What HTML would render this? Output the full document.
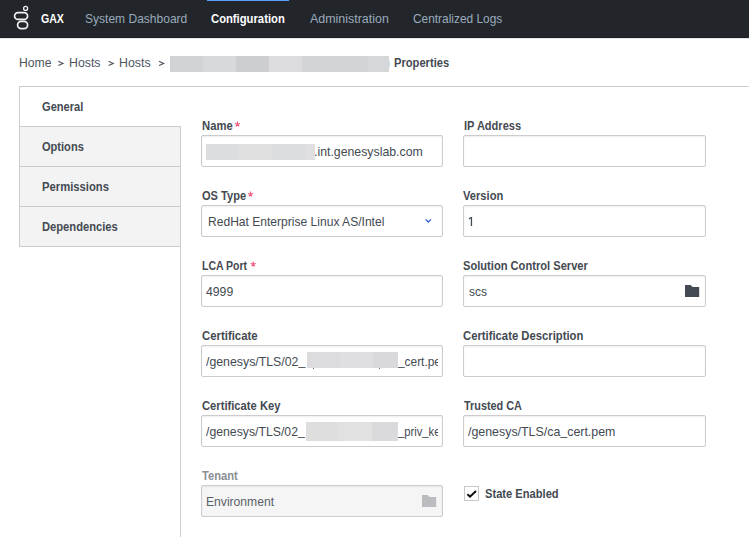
<!DOCTYPE html>
<html><head><meta charset="utf-8">
<style>
html,body{margin:0;padding:0;}
body{width:749px;height:537px;overflow:hidden;background:#fff;font-family:"Liberation Sans",sans-serif;position:relative;}
.nav{position:absolute;left:0;top:0;width:749px;height:38px;background:#22262b;box-sizing:border-box;border-bottom:1px solid #1d2024;}
.navb{position:absolute;left:0;top:38px;width:749px;height:1px;background:#e6e6e6;}
.bar{position:absolute;left:207px;top:0;width:82px;height:1px;background:#5b9dfb;}
.t{position:absolute;font-size:13px;line-height:16px;white-space:nowrap;transform-origin:0 0;display:block;}
.r{position:absolute;}
.u{position:relative;top:-1.5px;}
.ast{position:absolute;font-size:13px;line-height:16px;color:#ea4f6b;}
.inp{position:absolute;box-sizing:border-box;height:32px;border:1px solid #ccc;border-radius:2px;background:#fff;box-shadow:inset 0 1px 2px rgba(0,0,0,0.07);}
.l{left:201px;width:242px;}
.rr{left:463px;width:243px;}
.tab{position:absolute;left:19px;width:162px;height:41px;box-sizing:border-box;border:1px solid #ccc;background:#f3f3f3;}
.ln{position:absolute;background:#ccc;}
</style></head><body>
<div class="nav"></div><div class="navb"></div><div class="bar"></div>
<svg style="position:absolute;left:10px;top:2px" width="24" height="32" viewBox="0 0 24 32">
<circle cx="15.6" cy="6.4" r="2" fill="none" stroke="#f0f0f0" stroke-width="1.3"/>
<rect x="4.6" y="10.6" width="13" height="6.8" rx="3.4" fill="none" stroke="#f0f0f0" stroke-width="1.7"/>
<rect x="7.6" y="19.4" width="10" height="7.2" rx="3.6" fill="none" stroke="#f0f0f0" stroke-width="1.7"/>
</svg>
<svg style="position:absolute;left:57px;top:59px" width="9" height="9" viewBox="0 0 9 9"><path d="M1.30 2.2 L6.00 4.4 L1.30 6.6" fill="none" stroke="#4e5560" stroke-width="1.1"/></svg>
<svg style="position:absolute;left:108px;top:59px" width="9" height="9" viewBox="0 0 9 9"><path d="M0.60 2.2 L5.30 4.4 L0.60 6.6" fill="none" stroke="#4e5560" stroke-width="1.1"/></svg>
<svg style="position:absolute;left:158px;top:59px" width="9" height="9" viewBox="0 0 9 9"><path d="M1.00 2.2 L5.70 4.4 L1.00 6.6" fill="none" stroke="#4e5560" stroke-width="1.1"/></svg>
<!-- panel -->
<div class="ln" style="left:19px;top:86px;width:730px;height:1px"></div>
<div class="ln" style="left:19px;top:86px;width:1px;height:41px"></div>
<div class="ln" style="left:180px;top:126px;width:1px;height:411px"></div>
<div class="tab" style="top:126px"></div>
<div class="tab" style="top:166px"></div>
<div class="tab" style="top:206px"></div>
<!-- inputs -->
<div class="inp l" style="top:135px"></div>
<div class="inp l" style="top:205px"></div>
<div class="inp l" style="top:275px"></div>
<div class="inp l" style="top:345px"></div>
<div class="inp l" style="top:415px"></div>
<div class="inp l" style="top:485px;background:#f5f5f5"></div>
<div class="inp rr" style="top:135px"></div>
<div class="inp rr" style="top:205px"></div>
<div class="inp rr" style="top:275px"></div>
<div class="inp rr" style="top:345px"></div>
<div class="inp rr" style="top:415px"></div>
<span class="t" style="left:41.30px;top:11px;font-weight:bold;color:#ffffff;transform:scaleX(0.8140)">GAX</span>
<span class="t" style="left:84.90px;top:11px;color:#9aaabb;transform:scaleX(0.9255)">System Dashboard</span>
<span class="t" style="left:211.30px;top:11px;font-weight:bold;color:#ffffff;transform:scaleX(0.8656)">Configuration</span>
<span class="t" style="left:309.60px;top:11px;color:#9aaabb;transform:scaleX(0.9569)">Administration</span>
<span class="t" style="left:413.10px;top:11px;color:#9aaabb;transform:scaleX(0.9148)">Centralized Logs</span>
<span class="t" style="left:18.56px;top:55px;color:#4e5560;transform:scaleX(0.9388)">Home</span>
<span class="t" style="left:69.25px;top:55px;color:#4e5560;transform:scaleX(0.9471)">Hosts</span>
<span class="t" style="left:119.35px;top:55px;color:#4e5560;transform:scaleX(0.9502)">Hosts</span>
<span class="t" style="left:393.80px;top:55px;font-weight:bold;color:#444a52;transform:scaleX(0.8584)">Properties</span>
<span class="t" style="left:42.20px;top:99px;font-weight:bold;color:#444a52;transform:scaleX(0.8535)">General</span>
<span class="t" style="left:42.30px;top:139px;font-weight:bold;color:#444a52;transform:scaleX(0.8511)">Options</span>
<span class="t" style="left:42.30px;top:179px;font-weight:bold;color:#444a52;transform:scaleX(0.8653)">Permissions</span>
<span class="t" style="left:42.30px;top:219px;font-weight:bold;color:#444a52;transform:scaleX(0.8599)">Dependencies</span>
<span class="t" style="left:201.70px;top:118px;font-weight:bold;color:#444a52;transform:scaleX(0.8670)">Name</span>
<span class="t" style="left:201.60px;top:188px;font-weight:bold;color:#444a52;transform:scaleX(0.8517)">OS Type</span>
<span class="t" style="left:202.00px;top:258px;font-weight:bold;color:#444a52;transform:scaleX(0.8070)">LCA Port</span>
<span class="t" style="left:201.60px;top:328px;font-weight:bold;color:#444a52;transform:scaleX(0.8745)">Certificate</span>
<span class="t" style="left:201.60px;top:398px;font-weight:bold;color:#444a52;transform:scaleX(0.8616)">Certificate Key</span>
<span class="t" style="left:201.60px;top:468px;font-weight:bold;color:#8b8e93;transform:scaleX(0.8602)">Tenant</span>
<span class="t" style="left:463.60px;top:118px;font-weight:bold;color:#444a52;transform:scaleX(0.8495)">IP Address</span>
<span class="t" style="left:463.40px;top:188px;font-weight:bold;color:#444a52;transform:scaleX(0.8570)">Version</span>
<span class="t" style="left:463.40px;top:258px;font-weight:bold;color:#444a52;transform:scaleX(0.8557)">Solution Control Server</span>
<span class="t" style="left:463.40px;top:328px;font-weight:bold;color:#444a52;transform:scaleX(0.8677)">Certificate Description</span>
<span class="t" style="left:463.90px;top:398px;font-weight:bold;color:#444a52;transform:scaleX(0.8348)">Trusted CA</span>
<span class="t" style="left:484.60px;top:486px;font-weight:bold;color:#444a52;transform:scaleX(0.8567)">State Enabled</span>
<span class="t" style="left:314.25px;top:144px;color:#444a52;transform:scaleX(0.9464)">.int.genesyslab.com</span>
<span class="t" style="left:207.67px;top:214px;color:#444a52;transform:scaleX(0.9280)">RedHat Enterprise Linux AS/Intel</span>
<span class="t" style="left:206.00px;top:284px;color:#444a52;transform:scaleX(0.9411)">4999</span>
<span class="t" style="left:206.00px;top:354px;color:#444a52;transform:scaleX(0.9474)">/genesys/TLS/02<span class="u">_</span></span>
<span class="t" style="left:206.00px;top:424px;color:#444a52;transform:scaleX(0.9426)">/genesys/TLS/02<span class="u">_</span></span>
<span class="t" style="left:205.67px;top:494px;color:#5a5f67;transform:scaleX(0.9327)">Environment</span>
<span class="t" style="left:468.60px;top:284px;color:#444a52;transform:scaleX(0.9200)">scs</span>
<span class="t" style="left:468.20px;top:424px;color:#444a52;transform:scaleX(0.9532)">/genesys/TLS/ca<span class="u">_</span>cert.pem</span>
<div style="position:absolute;left:398px;top:354px;width:39.8px;height:16px;overflow:hidden"><span class="t" style="left:0;top:0;color:#444a52;transform:scaleX(0.913)"><span class="u">_</span>cert.pem</span></div>
<div style="position:absolute;left:398px;top:424px;width:39.8px;height:16px;overflow:hidden"><span class="t" style="left:0;top:0;color:#444a52;transform:scaleX(0.864)"><span class="u">_</span>priv<span class="u">_</span>key</span></div>
<!-- redactions -->
<div class="r" style="left:170px;top:56px;width:33px;height:16px;background:#d2d3d6"></div>
<div class="r" style="left:203px;top:56px;width:33px;height:16px;background:#d8d9db"></div>
<div class="r" style="left:236px;top:56px;width:33px;height:16px;background:#cdced2"></div>
<div class="r" style="left:269px;top:56px;width:33px;height:16px;background:#dcdcde"></div>
<div class="r" style="left:302px;top:56px;width:33px;height:16px;background:#d3d4d6"></div>
<div class="r" style="left:335px;top:56px;width:33px;height:16px;background:#d3d4d6"></div>
<div class="r" style="left:368px;top:56px;width:21px;height:16px;background:#d6d7d9"></div>
<div class="r" style="left:206px;top:144px;width:33px;height:16px;background:#dcdddf"></div>
<div class="r" style="left:239px;top:144px;width:33px;height:16px;background:#e0e0e1"></div>
<div class="r" style="left:272px;top:144px;width:33px;height:16px;background:#dbdcde"></div>
<div class="r" style="left:305px;top:144px;width:10px;height:16px;background:#dfdfe1"></div>
<div class="r" style="left:307px;top:352px;width:33px;height:16px;background:#dcdcde"></div>
<div class="r" style="left:340px;top:352px;width:33px;height:16px;background:#dfdfe1"></div>
<div class="r" style="left:373px;top:352px;width:25px;height:16px;background:#d9d9dc"></div>
<div class="r" style="left:306px;top:422px;width:33px;height:19px;background:#dededf"></div>
<div class="r" style="left:339px;top:422px;width:33px;height:19px;background:#e1e1e2"></div>
<div class="r" style="left:372px;top:422px;width:26px;height:19px;background:#dadadd"></div>
<div class="r" style="left:313px;top:368px;width:1px;height:1px;background:#6a5a90"></div>
<div class="r" style="left:379px;top:368px;width:1px;height:1px;background:#6a5a90"></div>
<div class="r" style="left:389px;top:61px;width:1px;height:6px;background:#c4e8fb"></div>
<!-- asterisks -->
<svg style="position:absolute;left:232px;top:119px" width="11" height="11" viewBox="0 0 11 11"><path d="M5.50 5.25 L5.50 2.55 M5.50 5.25 L8.07 4.42 M5.50 5.25 L7.09 7.43 M5.50 5.25 L3.91 7.43 M5.50 5.25 L2.93 4.42" fill="none" stroke="#ee5577" stroke-width="1.1"/></svg>
<svg style="position:absolute;left:245px;top:189px" width="11" height="11" viewBox="0 0 11 11"><path d="M5.50 5.25 L5.50 2.55 M5.50 5.25 L8.07 4.42 M5.50 5.25 L7.09 7.43 M5.50 5.25 L3.91 7.43 M5.50 5.25 L2.93 4.42" fill="none" stroke="#ee5577" stroke-width="1.1"/></svg>
<svg style="position:absolute;left:248px;top:259px" width="11" height="11" viewBox="0 0 11 11"><path d="M5.20 5.25 L5.20 2.55 M5.20 5.25 L7.77 4.42 M5.20 5.25 L6.79 7.43 M5.20 5.25 L3.61 7.43 M5.20 5.25 L2.63 4.42" fill="none" stroke="#ee5577" stroke-width="1.1"/></svg>
<svg style="position:absolute;left:465px;top:214px" width="12" height="15" viewBox="465 214 12 15"><path d="M470.8 217 H472.1 V226 H470.8 V218.5 L468.9 219.6 V218.3 Z" fill="#444a52"/></svg>
<!-- chevron -->
<svg style="position:absolute;left:424px;top:217px" width="9" height="8" viewBox="0 0 9 8"><path d="M1.6 2.4 L4.3 5 L7 2.4" fill="none" stroke="#3463e0" stroke-width="1.3"/></svg>
<!-- folders -->
<svg style="position:absolute;left:684px;top:284px" width="17" height="14" viewBox="0 0 17 14"><path d="M1 1 H6.6 L8.6 3 H15.2 V13 H1 Z" fill="#444a52"/></svg>
<svg style="position:absolute;left:421px;top:494px" width="17" height="14" viewBox="0 0 17 14"><path d="M1 1 H6.6 L8.6 3 H15.2 V13 H1 Z" fill="#bbbcc0"/></svg>
<!-- checkbox -->
<div style="position:absolute;left:464px;top:486px;width:15px;height:15px;box-sizing:border-box;border:1px solid #c8c8c8;background:#fff"></div>
<svg style="position:absolute;left:464px;top:486px" width="15" height="15" viewBox="0 0 15 15"><path d="M3.4 8.3 L6 10.6 L12 4.9" fill="none" stroke="#111" stroke-width="2"/></svg>
</body></html>
